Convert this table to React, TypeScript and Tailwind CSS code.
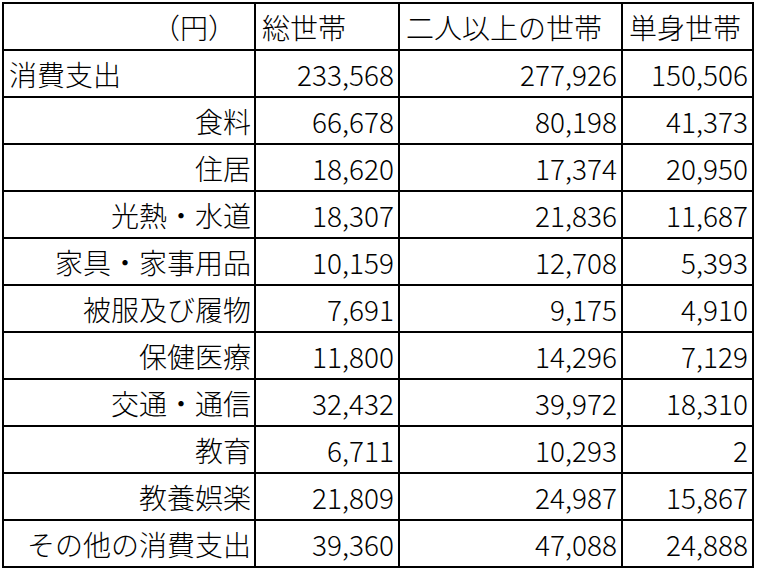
const rows: [string, string, string, string][] = [
  ["食料", "66,678", "80,198", "41,373"],
  ["住居", "18,620", "17,374", "20,950"],
  ["光熱・水道", "18,307", "21,836", "11,687"],
  ["家具・家事用品", "10,159", "12,708", "5,393"],
  ["被服及び履物", "7,691", "9,175", "4,910"],
  ["保健医療", "11,800", "14,296", "7,129"],
  ["交通・通信", "32,432", "39,972", "18,310"],
  ["教育", "6,711", "10,293", "2"],
  ["教養娯楽", "21,809", "24,987", "15,867"],
  ["その他の消費支出", "39,360", "47,088", "24,888"],
];

const cell = "bg-white h-[45px] flex items-center whitespace-nowrap";

export default function App() {
  return (
    <div
      className="w-[757px] h-[571px] bg-white overflow-hidden text-black text-[28px] leading-none font-light"
      style={{ fontFamily: '"Noto Sans CJK JP", "Noto Sans", sans-serif' }}
    >
      <div className="ml-[2px] mt-[2px] w-fit bg-black p-[2px] grid grid-cols-[250px_142px_221px_129px] gap-[2px]">
        {/* header */}
        <div className={`${cell} justify-end pr-[18px]`}>（円）</div>
        <div className={`${cell} pl-[6px]`}>総世帯</div>
        <div className={`${cell} pl-[6px]`}>二人以上の世帯</div>
        <div className={`${cell} pl-[6px]`}>単身世帯</div>

        <div className={`${cell} pl-[5px]`}>消費支出</div>
        <div className={`${cell} justify-end pr-[4px]`}>233,568</div>
        <div className={`${cell} justify-end pr-[4px]`}>277,926</div>
        <div className={`${cell} justify-end pr-[4px]`}>150,506</div>

        {rows.map((r) => (
          <>
            <div key={r[0]} className={`${cell} justify-end pr-[3px]`}>{r[0]}</div>
            <div className={`${cell} justify-end pr-[4px]`}>{r[1]}</div>
            <div className={`${cell} justify-end pr-[4px]`}>{r[2]}</div>
            <div className={`${cell} justify-end pr-[4px]`}>{r[3]}</div>
          </>
        ))}
      </div>
    </div>
  );
}
